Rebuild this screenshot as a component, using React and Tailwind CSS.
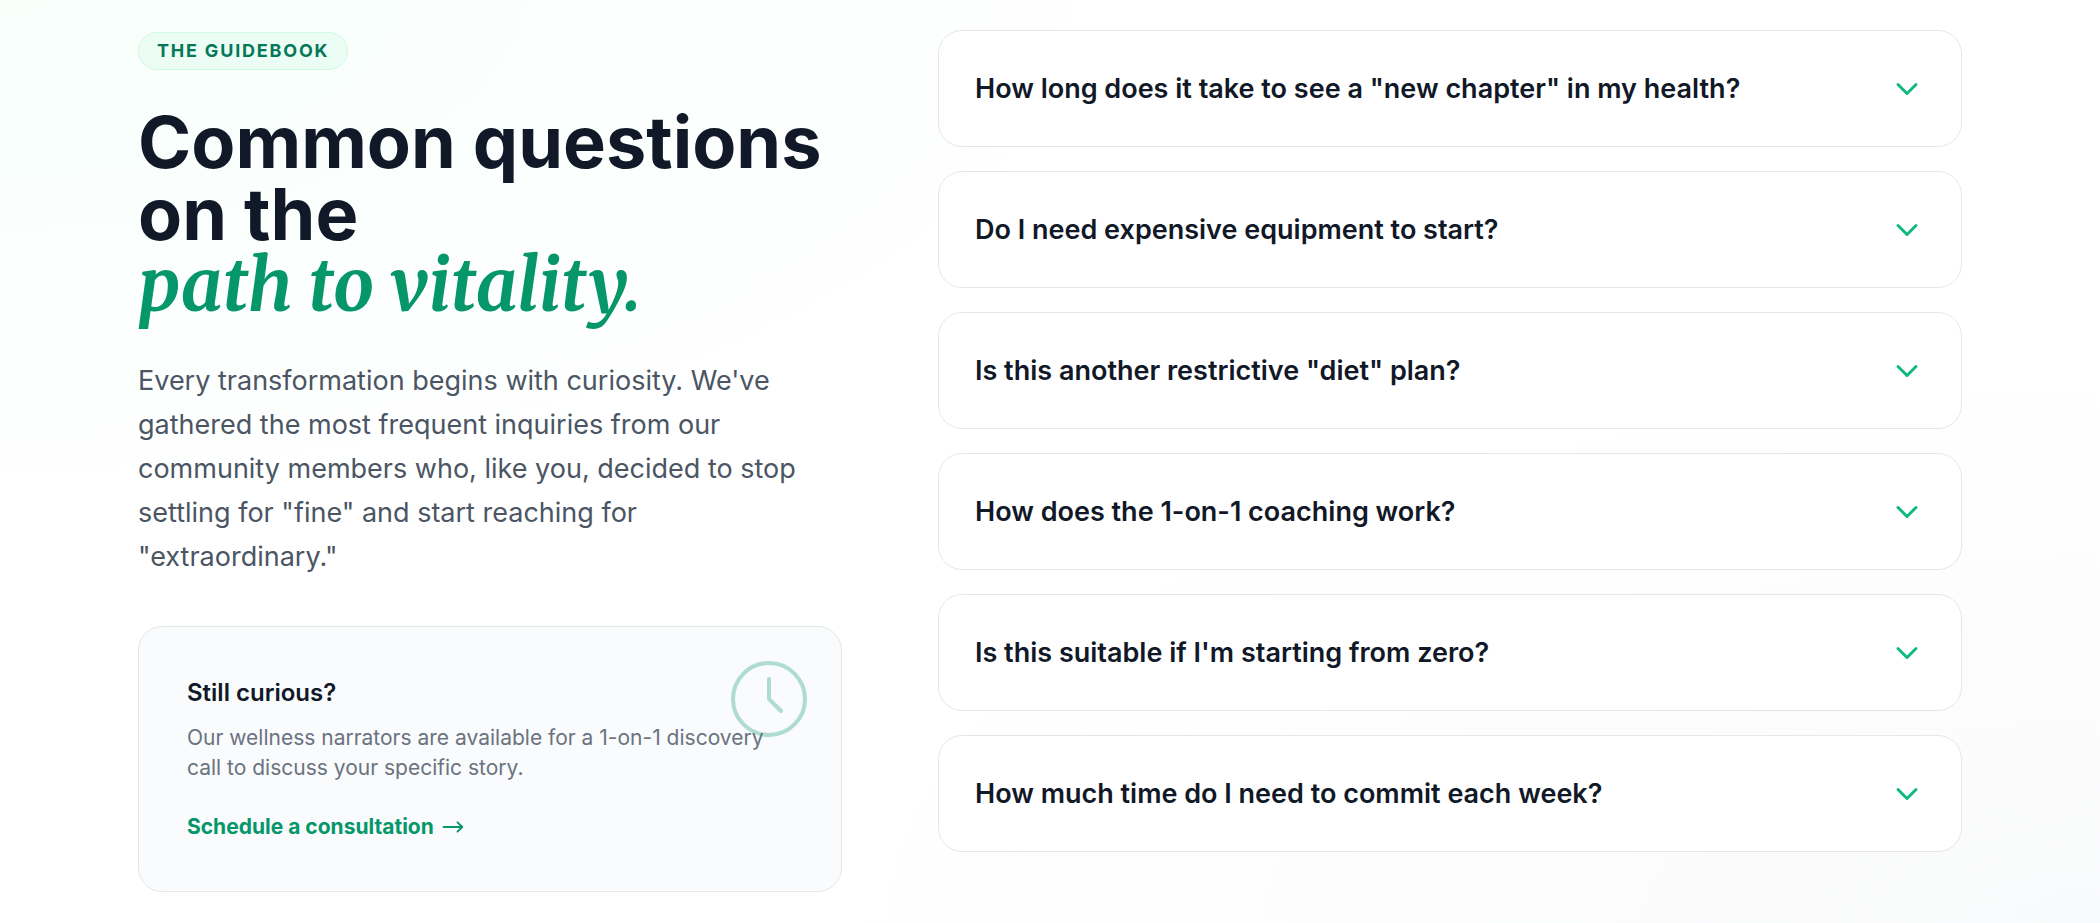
import React, { useState } from 'react';
import { ChevronDown } from 'lucide-react';

const faqs = [
  {
    question: 'How long does it take to see a "new chapter" in my health?',
    answer: 'Most members notice better energy and sleep within the first three to four weeks.',
  },
  {
    question: 'Do I need expensive equipment to start?',
    answer: 'No. A comfortable pair of shoes and a little floor space are enough.',
  },
  {
    question: 'Is this another restrictive "diet" plan?',
    answer: 'Not at all. We build habits around the food you already enjoy.',
  },
  {
    question: 'How does the 1-on-1 coaching work?',
    answer: 'You meet your coach once a week by video and stay in touch by chat in between.',
  },
  {
    question: "Is this suitable if I'm starting from zero?",
    answer: 'Yes. Every plan begins at your current level and grows with you.',
  },
  {
    question: 'How much time do I need to commit each week?',
    answer: 'Plan for around three hours a week, split in whatever way suits you.',
  },
];

const ClockIcon = ({ className }) => (
  <svg
    className={className}
    viewBox="0 0 24 24"
    fill="none"
    stroke="currentColor"
    strokeWidth="1"
    strokeLinecap="round"
    strokeLinejoin="round"
    aria-hidden="true"
  >
    <circle cx="12" cy="12" r="9" />
    <path d="M12 7v5l3 3" />
  </svg>
);

const ArrowIcon = ({ className }) => (
  <svg
    className={className}
    viewBox="0 0 22 12"
    fill="none"
    stroke="currentColor"
    strokeWidth="1.8"
    strokeLinecap="round"
    strokeLinejoin="round"
    aria-hidden="true"
  >
    <path d="M1.5 6h18.5M15.5 1.3 20.3 6l-4.8 4.7" />
  </svg>
);

const FaqItem = ({ id, question, answer, isOpen, onToggle }) => (
  <div className="rounded-3xl border border-[#e5e7eb] bg-white">
    <button
      type="button"
      aria-expanded={isOpen}
      aria-controls={id}
      onClick={onToggle}
      className="flex min-h-[115px] w-full cursor-pointer items-center justify-between gap-6 px-9 text-left"
    >
      <span className="text-[27px] leading-[42px] font-semibold text-[#111827]">{question}</span>
      <ChevronDown
        className={`size-9 shrink-0 text-[#10b981] transition-transform ${isOpen ? 'rotate-180' : ''}`}
      />
    </button>
    {isOpen && (
      <p id={id} className="px-9 pb-9 text-2xl text-[#4b5563]">
        {answer}
      </p>
    )}
  </div>
);

const App = () => {
  const [openIndex, setOpenIndex] = useState(null);

  const handleToggle = (index) => {
    setOpenIndex(openIndex === index ? null : index);
  };

  return (
    <section className="min-h-screen bg-white bg-[radial-gradient(ellipse_at_top_left,#f7fffb_0%,transparent_42%),radial-gradient(ellipse_at_bottom_right,#f9fafb_0%,transparent_42%)] font-['Inter',sans-serif]">
      <div className="mx-auto grid max-w-[1920px] grid-cols-1 items-start gap-16 px-6 py-[30px] lg:grid-cols-12 lg:gap-24 lg:px-12">
        <div className="pt-0.5 lg:col-span-5">
          <span className="block w-fit rounded-full border border-[#d1fae5] bg-[#ecfdf5] px-[18px] py-1.5 text-lg leading-6 font-bold tracking-widest text-[#047857] uppercase">
            The Guidebook
          </span>

          <h1 className="mt-9 text-7xl leading-none font-bold text-[#111827]">
            Common questions on the
            <span className="block font-['Merriweather','Liberation_Serif',serif] text-[#059669] italic">
              path to vitality.
            </span>
          </h1>

          <p className="mt-[37px] text-[27px] leading-[44px] text-[#4b5563]">
            Every transformation begins with curiosity. We've gathered the most frequent inquiries from our
            community members who, like you, decided to stop settling for "fine" and start reaching for
            "extraordinary."
          </p>

          {/* Contact card */}
          <div className="relative mt-[47px] rounded-3xl border border-[#e2e8e8] bg-[#f9fbfc] p-12">
            <ClockIcon className="absolute top-6 right-6 size-24 text-[#059669] opacity-30" />
            <div className="relative">
              <h2 className="text-2xl leading-9 font-semibold text-[#111827]">Still curious?</h2>
              <p className="mt-3 text-[21px] leading-[30px] text-[#6b7280]">
                Our wellness narrators are available for a 1-on-1 discovery call to discuss your specific story.
              </p>
              <a
                href="#consultation"
                className="mt-7 flex w-fit items-center gap-2 text-[21px] leading-8 font-bold text-[#059669] hover:text-[#047857]"
              >
                Schedule a consultation
                <ArrowIcon className="h-3 w-[22px]" />
              </a>
            </div>
          </div>
        </div>

        <div className="flex flex-col gap-6 lg:col-span-7">
          {faqs.map((faq, index) => (
            <FaqItem
              key={faq.question}
              id={`faq-${index}`}
              question={faq.question}
              answer={faq.answer}
              isOpen={openIndex === index}
              onToggle={() => handleToggle(index)}
            />
          ))}
        </div>
      </div>
    </section>
  );
};

export default App;
